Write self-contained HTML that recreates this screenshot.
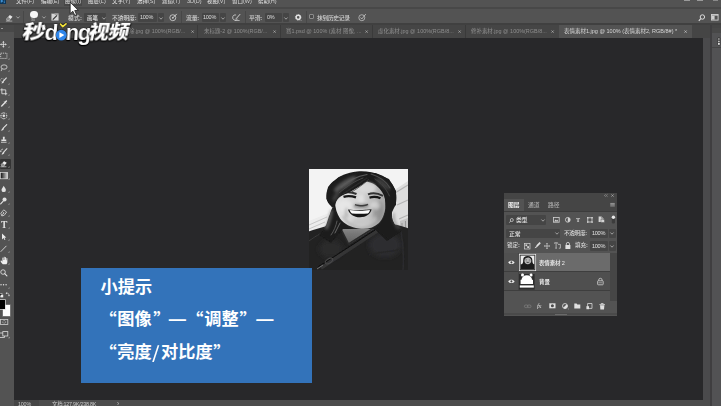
<!DOCTYPE html>
<html lang="zh-CN"><head><meta charset="utf-8"><title>Photoshop</title>
<style>
html,body{margin:0;padding:0;background:#28282a;}
body{width:721px;height:406px;overflow:hidden;position:relative;font-family:"Liberation Sans","Noto Sans CJK SC",sans-serif;}
#app{position:absolute;left:0;top:0;width:721px;height:406px;overflow:hidden;}
.t{position:absolute;white-space:nowrap;transform:scale(.5);transform-origin:0 0;display:block;}
svg{overflow:visible;display:block}
</style></head><body><div id="app">
<div style="position:absolute;left:0px;top:0px;width:721px;height:406px;background:#28282a;"></div>
<div style="position:absolute;left:0px;top:0px;width:721px;height:7px;background:#535353;"></div>
<div style="position:absolute;left:0px;top:6.5px;width:721px;height:2.5px;background:#484848;"></div>
<div style="position:absolute;left:0px;top:9px;width:721px;height:13.9px;background:#535353;"></div>
<div style="position:absolute;left:0px;top:22.9px;width:721px;height:1.8px;background:#404040;"></div>
<div style="position:absolute;left:0px;top:24.6px;width:721px;height:13.3px;background:#454545;"></div>
<div style="position:absolute;left:0px;top:25px;width:13.5px;height:381px;background:#535353;"></div>
<div style="position:absolute;left:0px;top:24.5px;width:13.5px;height:7px;background:#484848;"></div>
<div style="position:absolute;left:703px;top:38px;width:7px;height:362px;background:#4a4a4c;"></div>
<div style="position:absolute;left:709.5px;top:25px;width:2.5px;height:381px;background:#3f3e40;"></div>
<div style="position:absolute;left:712px;top:28px;width:9px;height:378px;background:#525254;"></div>
<div style="position:absolute;left:712px;top:28px;width:9px;height:5px;background:#484848;"></div>
<div style="position:absolute;left:712px;top:47px;width:9px;height:1px;background:#444;"></div>
<div style="position:absolute;left:14px;top:399.5px;width:696px;height:6.5px;background:#4c4c4c;"></div>
<div style="position:absolute;left:14px;top:399.5px;width:25px;height:6.5px;background:#454545;"></div>
<div style="position:absolute;left:0px;top:0px;width:5.8px;height:3.8px;background:#0e3557;"></div>
<svg style="position:absolute;left:0px;top:0px;" width="6" height="4" viewBox="0 0 6 4"><path d="M1.2 0V2.6M1.2 .4H2.4Q3.4 .8 2.4 1.6H1.2" fill="none" stroke="#4aa6f0" stroke-width=".8"/><path d="M4.8 .9Q3.6 .9 4 1.7Q5 2.2 4.4 2.8H3.6" fill="none" stroke="#4aa6f0" stroke-width=".6"/></svg>
<div style="position:absolute;left:63.8px;top:0px;width:18.4px;height:6.3px;background:#474747;"></div>
<span class="t" style="left:16px;top:-2.3px;font-size:11.0px;line-height:13.2px;color:#d4d4d4;font-weight:500;letter-spacing:0px;">文件(F)</span>
<span class="t" style="left:41px;top:-2.3px;font-size:11.0px;line-height:13.2px;color:#d4d4d4;font-weight:500;letter-spacing:0px;">编辑(E)</span>
<span class="t" style="left:65px;top:-2.3px;font-size:11.0px;line-height:13.2px;color:#d4d4d4;font-weight:500;letter-spacing:0px;">图像(I)</span>
<span class="t" style="left:88px;top:-2.3px;font-size:11.0px;line-height:13.2px;color:#d4d4d4;font-weight:500;letter-spacing:0px;">图层(L)</span>
<span class="t" style="left:112px;top:-2.3px;font-size:11.0px;line-height:13.2px;color:#d4d4d4;font-weight:500;letter-spacing:0px;">文字(Y)</span>
<span class="t" style="left:137px;top:-2.3px;font-size:11.0px;line-height:13.2px;color:#d4d4d4;font-weight:500;letter-spacing:0px;">选择(S)</span>
<span class="t" style="left:162px;top:-2.3px;font-size:11.0px;line-height:13.2px;color:#d4d4d4;font-weight:500;letter-spacing:0px;">滤镜(T)</span>
<span class="t" style="left:187px;top:-2.3px;font-size:11.0px;line-height:13.2px;color:#d4d4d4;font-weight:500;letter-spacing:0px;">3D(D)</span>
<span class="t" style="left:207px;top:-2.3px;font-size:11.0px;line-height:13.2px;color:#d4d4d4;font-weight:500;letter-spacing:0px;">视图(V)</span>
<span class="t" style="left:232px;top:-2.3px;font-size:11.0px;line-height:13.2px;color:#d4d4d4;font-weight:500;letter-spacing:0px;">窗口(W)</span>
<span class="t" style="left:258px;top:-2.3px;font-size:11.0px;line-height:13.2px;color:#d4d4d4;font-weight:500;letter-spacing:0px;">帮助(H)</span>
<div style="position:absolute;left:684px;top:0px;width:6px;height:1.2px;background:#9a9a9a;"></div>
<div style="position:absolute;left:697px;top:0px;width:6px;height:1.2px;background:#9a9a9a;"></div>
<div style="position:absolute;left:713px;top:0px;width:5px;height:1px;background:#8a8a8a;"></div>
<svg style="position:absolute;left:4.8px;top:13.8px;" width="8.6" height="7.7" viewBox="0 0 10 9"><path d="M1.2 6.2 L5.6 1.2 L8.8 3.2 L4.8 8 L2.6 8 Z" fill="#e4e4e4"/><path d="M1.2 6.2 L3.6 3.6 L6.2 5.6 L4.4 8 L2.6 8Z" fill="#8a8a8a"/><path d="M1 8.3H8.5" stroke="#d0d0d0" stroke-width=".8"/></svg>
<svg style="position:absolute;left:15.8px;top:15.8px;" width="4" height="3" viewBox="0 0 4 3"><path d="M.4 .5 L2 2.2 L3.6 .5" fill="none" stroke="#b8b8b8" stroke-width=".8"/></svg>
<div style="position:absolute;left:23px;top:11px;width:0.8px;height:11.5px;background:#474747;"></div>
<div style="position:absolute;left:30.4px;top:10.6px;width:7.3px;height:7.3px;background:#f6f6f6;border-radius:50%"></div>
<span class="t" style="left:31.4px;top:18.3px;font-size:6.8px;line-height:8.2px;color:#c8c8c8;font-weight:400;letter-spacing:0px;">30</span>
<svg style="position:absolute;left:42px;top:15.8px;" width="4" height="3" viewBox="0 0 4 3"><path d="M.4 .5 L2 2.2 L3.6 .5" fill="none" stroke="#b8b8b8" stroke-width=".8"/></svg>
<svg style="position:absolute;left:50.9px;top:12.9px;" width="8" height="8" viewBox="0 0 9 9"><rect x=".5" y=".5" width="8" height="8" fill="#d6d6d6"/><path d="M.5 .5h3l.8 1h4.2" fill="none" stroke="#666" stroke-width=".6"/><path d="M2 7.4 L6.8 2.6" stroke="#333" stroke-width="1.3"/></svg>
<span class="t" style="left:67.6px;top:13.8px;font-size:11.6px;line-height:13.9px;color:#d2d2d2;font-weight:500;letter-spacing:0.4px;">模式<b>:</b></span>
<div style="position:absolute;left:84.1px;top:12.8px;width:22.3px;height:9.1px;background:#454545;border-radius:1px"></div>
<span class="t" style="left:87.2px;top:14.5px;font-size:11.0px;line-height:13.2px;color:#dedede;font-weight:500;letter-spacing:0px;">画笔</span>
<svg style="position:absolute;left:101.8px;top:16.8px;" width="4" height="3" viewBox="0 0 4 3"><path d="M.4 .5 L2 2.2 L3.6 .5" fill="none" stroke="#b8b8b8" stroke-width=".8"/></svg>
<span class="t" style="left:112px;top:13.8px;font-size:11.6px;line-height:13.9px;color:#d2d2d2;font-weight:500;letter-spacing:-0.2px;">不透明度<b>:</b></span>
<div style="position:absolute;left:137.6px;top:12.8px;width:19px;height:9.1px;background:#454545;border-radius:1px"></div>
<span class="t" style="left:140.2px;top:14.0px;font-size:11.0px;line-height:13.2px;color:#dedede;font-weight:500;letter-spacing:-0.5px;">100%</span>
<div style="position:absolute;left:158px;top:12.8px;width:6px;height:9.1px;background:#454545;border-radius:1px"></div>
<svg style="position:absolute;left:159px;top:16.8px;" width="4" height="3" viewBox="0 0 4 3"><path d="M.4 .5 L2 2.2 L3.6 .5" fill="none" stroke="#b8b8b8" stroke-width=".8"/></svg>
<svg style="position:absolute;left:168.8px;top:13.2px;" width="8.6" height="8.6" viewBox="0 0 9.5 9.5"><circle cx="4.2" cy="5.2" r="3.3" fill="none" stroke="#d4d4d4" stroke-width=".9"/><path d="M4.2 5.4 L8.6 1" stroke="#d4d4d4" stroke-width="1.1"/><circle cx="4.2" cy="5.4" r=".9" fill="#d4d4d4"/></svg>
<div style="position:absolute;left:181px;top:11px;width:0.8px;height:11.5px;background:#474747;"></div>
<span class="t" style="left:185.8px;top:13.8px;font-size:11.6px;line-height:13.9px;color:#d2d2d2;font-weight:500;letter-spacing:-0.3px;">流量<b>:</b></span>
<div style="position:absolute;left:201.6px;top:12.8px;width:17.4px;height:9.1px;background:#454545;border-radius:1px"></div>
<span class="t" style="left:203.4px;top:14.0px;font-size:11.0px;line-height:13.2px;color:#dedede;font-weight:500;letter-spacing:-0.5px;">100%</span>
<div style="position:absolute;left:220.4px;top:12.8px;width:6px;height:9.1px;background:#454545;border-radius:1px"></div>
<svg style="position:absolute;left:221.4px;top:16.8px;" width="4" height="3" viewBox="0 0 4 3"><path d="M.4 .5 L2 2.2 L3.6 .5" fill="none" stroke="#b8b8b8" stroke-width=".8"/></svg>
<svg style="position:absolute;left:231.8px;top:13.2px;" width="8.9" height="8.5" viewBox="0 0 10 9.5"><path d="M4.6 2.2 A3 3 0 1 0 6.4 6.4" fill="none" stroke="#d4d4d4" stroke-width=".9"/><path d="M4.4 6.6 L9.2 1.2" stroke="#d4d4d4" stroke-width="1.1"/><path d="M3.2 8.4H8.6" stroke="#d4d4d4" stroke-width=".8"/></svg>
<div style="position:absolute;left:244.5px;top:11px;width:0.8px;height:11.5px;background:#474747;"></div>
<span class="t" style="left:249.2px;top:13.8px;font-size:11.6px;line-height:13.9px;color:#d2d2d2;font-weight:500;letter-spacing:-0.3px;">平滑<b>:</b></span>
<div style="position:absolute;left:265px;top:12.8px;width:17.4px;height:9.1px;background:#454545;border-radius:1px"></div>
<span class="t" style="left:266.8px;top:14.0px;font-size:11.0px;line-height:13.2px;color:#dedede;font-weight:500;letter-spacing:-0.5px;">0%</span>
<div style="position:absolute;left:283.4px;top:12.8px;width:6px;height:9.1px;background:#454545;border-radius:1px"></div>
<svg style="position:absolute;left:284.4px;top:16.8px;" width="4" height="3" viewBox="0 0 4 3"><path d="M.4 .5 L2 2.2 L3.6 .5" fill="none" stroke="#b8b8b8" stroke-width=".8"/></svg>
<svg style="position:absolute;left:294.9px;top:13.5px;" width="7.2" height="7.2" viewBox="0 0 9 9"><circle cx="4" cy="4.2" r="2.6" fill="none" stroke="#e4e4e4" stroke-width="1.9"/><circle cx="4" cy="4.2" r="3.6" fill="none" stroke="#e4e4e4" stroke-width=".9" stroke-dasharray="1.2 1.6"/><path d="M6.8 7.4h1.6l-.8 .9z" fill="#cfcfcf"/></svg>
<div style="position:absolute;left:306px;top:11px;width:0.8px;height:11.5px;background:#474747;"></div>
<div style="position:absolute;left:308.6px;top:13.6px;width:5px;height:5px;background:#4a4a4a;border:.7px solid #8c8c8c;border-radius:1px;box-sizing:border-box"></div>
<span class="t" style="left:317px;top:13.8px;font-size:11.6px;line-height:13.9px;color:#d2d2d2;font-weight:500;letter-spacing:-0.7px;">抹到历史记录</span>
<svg style="position:absolute;left:357.6px;top:13.2px;" width="8.6" height="8.6" viewBox="0 0 9.5 9.5"><circle cx="4.2" cy="5.2" r="3.3" fill="none" stroke="#bdbdbd" stroke-width=".9"/><path d="M2.8 5 L4.2 6.6 L8.6 1.2" fill="none" stroke="#bdbdbd" stroke-width="1"/></svg>
<svg style="position:absolute;left:697.5px;top:13.5px;" width="8" height="8" viewBox="0 0 8 8"><circle cx="4.4" cy="3" r="2.2" fill="none" stroke="#dcdcdc" stroke-width="1"/><path d="M2.8 4.6 L.8 6.8" stroke="#dcdcdc" stroke-width="1.2"/></svg>
<svg style="position:absolute;left:711px;top:14px;" width="8" height="7" viewBox="0 0 8 7"><rect x=".5" y=".5" width="6.6" height="5.6" fill="none" stroke="#d0d0d0" stroke-width=".9"/><rect x="1" y="1.8" width="2.6" height="3.8" fill="#d0d0d0"/><path d="M.5 1.2h6.6" stroke="#d0d0d0" stroke-width=".9"/></svg>
<svg style="position:absolute;left:67.8px;top:-0.4px;" width="13.2" height="17.6" viewBox="0 0 12 16"><path d="M2 2 L2 12.4 L4.4 10.2 L6.2 14 L7.8 13.3 L6.1 9.6 L9.3 9.4 Z" fill="#fff" stroke="#1a1a1a" stroke-width=".7" stroke-linejoin="round"/></svg>
<span class="t" style="left:129px;top:27.7px;font-size:10.9px;line-height:13.1px;color:#8e8e8e;font-weight:400;letter-spacing:0px;">除.jpg @ 100%(RGB/...</span>
<svg style="position:absolute;left:190.70000000000002px;top:30.0px;" width="3.2" height="3.2" viewBox="0 0 4 4"><path d="M.6 .6 L3.4 3.4 M3.4 .6 L.6 3.4" stroke="#b0b0b0" stroke-width=".9"/></svg>
<div style="position:absolute;left:197px;top:25px;width:0.8px;height:12.5px;background:#3a3a3a;"></div>
<span class="t" style="left:204px;top:27.7px;font-size:10.9px;line-height:13.1px;color:#8e8e8e;font-weight:400;letter-spacing:0px;">未标题-2 @ 100%(RGB/...</span>
<svg style="position:absolute;left:272.7px;top:30.0px;" width="3.2" height="3.2" viewBox="0 0 4 4"><path d="M.6 .6 L3.4 3.4 M3.4 .6 L.6 3.4" stroke="#b0b0b0" stroke-width=".9"/></svg>
<div style="position:absolute;left:280px;top:25px;width:0.8px;height:12.5px;background:#3a3a3a;"></div>
<span class="t" style="left:286px;top:27.7px;font-size:10.9px;line-height:13.1px;color:#8e8e8e;font-weight:400;letter-spacing:0px;">赛1.psd @ 100% (素材 图像, ...</span>
<svg style="position:absolute;left:364.7px;top:30.0px;" width="3.2" height="3.2" viewBox="0 0 4 4"><path d="M.6 .6 L3.4 3.4 M3.4 .6 L.6 3.4" stroke="#b0b0b0" stroke-width=".9"/></svg>
<div style="position:absolute;left:372px;top:25px;width:0.8px;height:12.5px;background:#3a3a3a;"></div>
<span class="t" style="left:378px;top:27.7px;font-size:10.9px;line-height:13.1px;color:#8e8e8e;font-weight:400;letter-spacing:0px;">虚化素材.jpg @ 100%(RGB/8...</span>
<svg style="position:absolute;left:457.7px;top:30.0px;" width="3.2" height="3.2" viewBox="0 0 4 4"><path d="M.6 .6 L3.4 3.4 M3.4 .6 L.6 3.4" stroke="#b0b0b0" stroke-width=".9"/></svg>
<div style="position:absolute;left:465px;top:25px;width:0.8px;height:12.5px;background:#3a3a3a;"></div>
<span class="t" style="left:471px;top:27.7px;font-size:10.9px;line-height:13.1px;color:#8e8e8e;font-weight:400;letter-spacing:0px;">修补素材.jpg @ 100%(RGB/8...</span>
<svg style="position:absolute;left:550.6999999999999px;top:30.0px;" width="3.2" height="3.2" viewBox="0 0 4 4"><path d="M.6 .6 L3.4 3.4 M3.4 .6 L.6 3.4" stroke="#b0b0b0" stroke-width=".9"/></svg>
<div style="position:absolute;left:559px;top:25px;width:133px;height:12.7px;background:#535353;"></div>
<span class="t" style="left:564px;top:27.7px;font-size:11.0px;line-height:13.2px;color:#d6d6d6;font-weight:400;letter-spacing:0px;">表情素材1.jpg @ 100% (表情素材2, RGB/8#) *</span>
<svg style="position:absolute;left:683.6999999999999px;top:30.0px;" width="3.2" height="3.2" viewBox="0 0 4 4"><path d="M.6 .6 L3.4 3.4 M3.4 .6 L.6 3.4" stroke="#c8c8c8" stroke-width=".9"/></svg>
<svg style="position:absolute;left:716.5px;top:36.5px;" width="4" height="9" viewBox="0 0 4 9"><rect x=".6" y=".4" width="2.6" height="8" rx=".8" fill="#2e2e2e"/><circle cx="1.9" cy="2" r=".8" fill="#e0e0e0"/><circle cx="1.9" cy="4.4" r=".8" fill="#e0e0e0"/><rect x="1" y="5.8" width="1.8" height="2" fill="#e0e0e0"/></svg>
<span class="t" style="left:18.2px;top:400.5px;font-size:10.8px;line-height:13.0px;color:#c8c8c8;font-weight:400;letter-spacing:-0.4px;">100%</span>
<span class="t" style="left:52px;top:400.5px;font-size:10.8px;line-height:13.0px;color:#c8c8c8;font-weight:400;letter-spacing:-0.5px;">文档:127.9K/238.8K</span>
<span class="t" style="left:116.5px;top:399.8px;font-size:13.0px;line-height:15.6px;color:#c0c0c0;font-weight:400;letter-spacing:0px;">›</span>
<div style="position:absolute;left:0.5px;top:27.5px;width:2px;height:0.8px;background:#9a9a9a;"></div>
<div style="position:absolute;left:0px;top:158.9px;width:10.7px;height:10.2px;background:#343434;border-radius:1px"></div>
<svg style="position:absolute;left:0.40px;top:40.80px" width="6.8" height="6.8" viewBox="0 0 9 9"><path d="M4.5 1V8M1 4.5H8" stroke="#e2e2e2" stroke-width="1"/><path d="M4.5 0L6.1 2H2.9ZM4.5 9L6.1 7H2.9ZM0 4.5L2 2.9V6.1ZM9 4.5L7 2.9V6.1Z" fill="#e2e2e2"/></svg>
<svg style="position:absolute;left:8.3px;top:46.40px" width="1.6" height="1.6" viewBox="0 0 2 2"><path d="M1.8 .2V1.8H.2Z" fill="#c4c4c4"/></svg>
<svg style="position:absolute;left:0.30px;top:51.60px" width="7.6" height="7.6" viewBox="0 0 9 9"><rect x=".8" y="1.4" width="7.4" height="6.2" fill="none" stroke="#e2e2e2" stroke-width=".9" stroke-dasharray="1.5 1"/></svg>
<svg style="position:absolute;left:8.3px;top:57.60px" width="1.6" height="1.6" viewBox="0 0 2 2"><path d="M1.8 .2V1.8H.2Z" fill="#c4c4c4"/></svg>
<svg style="position:absolute;left:0.30px;top:63.90px" width="7.6" height="7.6" viewBox="0 0 9 9"><ellipse cx="4.8" cy="3.6" rx="3.6" ry="2.6" fill="none" stroke="#e2e2e2" stroke-width=".9"/><path d="M2.4 5.4 C1.6 6.4 2.2 7.4 1.4 8.4" fill="none" stroke="#e2e2e2" stroke-width=".9"/></svg>
<svg style="position:absolute;left:8.3px;top:69.90px" width="1.6" height="1.6" viewBox="0 0 2 2"><path d="M1.8 .2V1.8H.2Z" fill="#c4c4c4"/></svg>
<svg style="position:absolute;left:0.30px;top:76.50px" width="7.6" height="7.6" viewBox="0 0 9 9"><path d="M7.8 .8 L4 5" stroke="#e2e2e2" stroke-width="1.3"/><path d="M4.2 4.6 C3 4.8 2.6 5.8 1.6 7.6 C3.2 7.4 4.4 6.8 4.8 5.6Z" fill="#e2e2e2"/><ellipse cx="2.6" cy="3.6" rx="2.2" ry="1.8" fill="none" stroke="#e2e2e2" stroke-width=".7" stroke-dasharray="1 .8"/></svg>
<svg style="position:absolute;left:8.3px;top:82.50px" width="1.6" height="1.6" viewBox="0 0 2 2"><path d="M1.8 .2V1.8H.2Z" fill="#c4c4c4"/></svg>
<svg style="position:absolute;left:0.30px;top:88.00px" width="7.6" height="7.6" viewBox="0 0 9 9"><path d="M2.2 .4V6.8H8.6M.4 2.2H6.8V8.6" fill="none" stroke="#e2e2e2" stroke-width="1"/></svg>
<svg style="position:absolute;left:8.3px;top:94.00px" width="1.6" height="1.6" viewBox="0 0 2 2"><path d="M1.8 .2V1.8H.2Z" fill="#c4c4c4"/></svg>
<svg style="position:absolute;left:0.30px;top:100.10px" width="7.6" height="7.6" viewBox="0 0 9 9"><path d="M1 8 L1.4 6.4 L5.2 2.6 L6.4 3.8 L2.6 7.6Z" fill="#e2e2e2"/><path d="M5 1.8 L7.2 4" stroke="#e2e2e2" stroke-width="1"/><path d="M6 2.8 L7.6 1.2" stroke="#e2e2e2" stroke-width="1.8" stroke-linecap="round"/></svg>
<svg style="position:absolute;left:8.3px;top:106.10px" width="1.6" height="1.6" viewBox="0 0 2 2"><path d="M1.8 .2V1.8H.2Z" fill="#c4c4c4"/></svg>
<svg style="position:absolute;left:0.30px;top:112.20px" width="7.6" height="7.6" viewBox="0 0 9 9"><rect x="1.4" y="1.4" width="6.2" height="6.2" rx="1" fill="none" stroke="#e2e2e2" stroke-width=".9" stroke-dasharray="1.4 .9"/><circle cx="4.5" cy="4.5" r="1.5" fill="#e2e2e2"/><path d="M4.5 .2V1.6M4.5 7.4V8.8M.2 4.5H1.6M7.4 4.5H8.8" stroke="#e2e2e2" stroke-width=".9"/></svg>
<svg style="position:absolute;left:8.3px;top:118.20px" width="1.6" height="1.6" viewBox="0 0 2 2"><path d="M1.8 .2V1.8H.2Z" fill="#c4c4c4"/></svg>
<svg style="position:absolute;left:0.30px;top:123.70px" width="7.6" height="7.6" viewBox="0 0 9 9"><path d="M8 .8 L3.8 5" stroke="#e2e2e2" stroke-width="1.3" stroke-linecap="round"/><path d="M3.9 4.6 C2.8 4.8 2.2 5.8 1 8 C2.8 7.8 4.2 7.2 4.8 5.6Z" fill="#e2e2e2"/></svg>
<svg style="position:absolute;left:8.3px;top:129.70px" width="1.6" height="1.6" viewBox="0 0 2 2"><path d="M1.8 .2V1.8H.2Z" fill="#c4c4c4"/></svg>
<svg style="position:absolute;left:0.30px;top:136.10px" width="7.6" height="7.6" viewBox="0 0 9 9"><path d="M3.4 .8H5.6V2.6L5.2 4.2H7.4V6H1.6V4.2H3.8L3.4 2.6Z" fill="#e2e2e2"/><path d="M1.2 7.4H7.8" stroke="#e2e2e2" stroke-width="1"/></svg>
<svg style="position:absolute;left:8.3px;top:142.10px" width="1.6" height="1.6" viewBox="0 0 2 2"><path d="M1.8 .2V1.8H.2Z" fill="#c4c4c4"/></svg>
<svg style="position:absolute;left:0.30px;top:148.20px" width="7.6" height="7.6" viewBox="0 0 9 9"><path d="M8.2 .8 L4.4 4.8" stroke="#e2e2e2" stroke-width="1.2" stroke-linecap="round"/><path d="M4.4 4.4 C3.4 4.6 2.8 5.6 1.8 7.8 C3.4 7.6 4.8 7 5.2 5.6Z" fill="#e2e2e2"/><path d="M3.6 1.4 A2.6 2.6 0 0 0 .8 4.4" fill="none" stroke="#e2e2e2" stroke-width=".8"/><path d="M.2 3.6L.9 5L2 3.9Z" fill="#e2e2e2"/></svg>
<svg style="position:absolute;left:8.3px;top:154.20px" width="1.6" height="1.6" viewBox="0 0 2 2"><path d="M1.8 .2V1.8H.2Z" fill="#c4c4c4"/></svg>
<svg style="position:absolute;left:0.40px;top:160.40px" width="7.6" height="7.6" viewBox="0 0 9 9"><path d="M.8 5.6 L4.8 1.4 L8 3.4 L4.6 7.4 L2.4 7.4Z" fill="#f0f0f0"/><path d="M.8 5.6 L2.8 3.5 L5.6 5.4 L4.2 7.4 L2.4 7.4Z" fill="#8e8e8e"/><path d="M.6 8H7.6" stroke="#e8e8e8" stroke-width=".8"/></svg>
<svg style="position:absolute;left:8.3px;top:166.40px" width="1.6" height="1.6" viewBox="0 0 2 2"><path d="M1.8 .2V1.8H.2Z" fill="#c4c4c4"/></svg>
<svg style="position:absolute;left:0.4px;top:172.4px" width="8" height="7.4" viewBox="0 0 8 7.4"><defs><linearGradient id="tg" x1="0" y1="0" x2="1" y2="0"><stop offset="0" stop-color="#0c0c0c"/><stop offset="1" stop-color="#d8d8d8"/></linearGradient></defs><rect x=".4" y=".4" width="7.2" height="6.4" fill="url(#tg)" stroke="#dcdcdc" stroke-width=".7"/></svg>
<svg style="position:absolute;left:8.3px;top:178.4px" width="2" height="2" viewBox="0 0 2 2"><path d="M1.6 .2V1.6H.2Z" fill="#bdbdbd"/></svg>
<svg style="position:absolute;left:0.00px;top:184.80px" width="7.6" height="7.6" viewBox="0 0 9 9"><path d="M4.4 .8 C5.4 2.8 7 4.2 7 5.8 A2.6 2.6 0 0 1 1.8 5.8 C1.8 4.2 3.4 2.8 4.4 .8Z" fill="#e2e2e2"/></svg>
<svg style="position:absolute;left:8.3px;top:190.80px" width="1.6" height="1.6" viewBox="0 0 2 2"><path d="M1.8 .2V1.8H.2Z" fill="#c4c4c4"/></svg>
<svg style="position:absolute;left:0.00px;top:196.90px" width="7.6" height="7.6" viewBox="0 0 9 9"><circle cx="5.4" cy="3" r="2.4" fill="#e2e2e2"/><path d="M3.8 4.8 L.8 8.2" stroke="#e2e2e2" stroke-width="1.3" stroke-linecap="round"/></svg>
<svg style="position:absolute;left:8.3px;top:202.90px" width="1.6" height="1.6" viewBox="0 0 2 2"><path d="M1.8 .2V1.8H.2Z" fill="#c4c4c4"/></svg>
<svg style="position:absolute;left:0.00px;top:208.80px" width="7.6" height="7.6" viewBox="0 0 9 9"><path d="M2.2 8.2 L1 5 L4.4 1 L7.8 3.6 L5 7.4Z" fill="none" stroke="#e2e2e2" stroke-width=".9" stroke-linejoin="round"/><circle cx="4.2" cy="4.8" r=".9" fill="#e2e2e2"/><path d="M2 8 L4 5" stroke="#e2e2e2" stroke-width=".7"/></svg>
<svg style="position:absolute;left:8.3px;top:214.80px" width="1.6" height="1.6" viewBox="0 0 2 2"><path d="M1.8 .2V1.8H.2Z" fill="#c4c4c4"/></svg>
<span class="t" style="left:0.8px;top:218.6px;font-size:19px;line-height:22px;color:#e4e4e4;font-weight:700;font-family:&quot;Liberation Serif&quot;,serif;">T</span>
<svg style="position:absolute;left:8.3px;top:226.6px" width="2" height="2" viewBox="0 0 2 2"><path d="M1.6 .2V1.6H.2Z" fill="#bdbdbd"/></svg>
<svg style="position:absolute;left:-0.20px;top:232.80px" width="7.6" height="7.6" viewBox="0 0 9 9"><path d="M2.4 .6 L2.4 7.6 L4.2 6 L5.4 8.4 L6.4 7.9 L5.2 5.6 L7.4 5.4Z" fill="#ececec"/></svg>
<svg style="position:absolute;left:8.3px;top:238.80px" width="1.6" height="1.6" viewBox="0 0 2 2"><path d="M1.8 .2V1.8H.2Z" fill="#c4c4c4"/></svg>
<svg style="position:absolute;left:0.00px;top:244.80px" width="7.6" height="7.6" viewBox="0 0 9 9"><path d="M.8 8 L7.6 1" stroke="#e2e2e2" stroke-width="1"/></svg>
<svg style="position:absolute;left:8.3px;top:250.80px" width="1.6" height="1.6" viewBox="0 0 2 2"><path d="M1.8 .2V1.8H.2Z" fill="#c4c4c4"/></svg>
<svg style="position:absolute;left:0.20px;top:256.10px" width="8.6" height="8.6" viewBox="0 0 9 9"><path d="M2.9 8.6 C2 7.4 .9 6.2 .6 5.4 C.5 4.8 1.2 4.6 1.7 5.1 L2.5 6 V2 C2.5 1.3 3.5 1.3 3.5 2 V4.2 H3.9 V1.2 C3.9 .5 4.9 .5 4.9 1.2 V4.2 H5.3 V1.6 C5.3 .9 6.3 .9 6.3 1.6 V4.4 H6.7 V2.6 C6.7 1.9 7.7 1.9 7.7 2.6 V6.2 C7.7 7.4 7.2 8 6.8 8.6Z" fill="#eeeeee"/></svg>
<svg style="position:absolute;left:8.3px;top:262.60px" width="1.6" height="1.6" viewBox="0 0 2 2"><path d="M1.8 .2V1.8H.2Z" fill="#c4c4c4"/></svg>
<svg style="position:absolute;left:0.00px;top:268.60px" width="7.6" height="7.6" viewBox="0 0 9 9"><circle cx="3.6" cy="3.6" r="2.7" fill="none" stroke="#e2e2e2" stroke-width="1"/><path d="M5.6 5.6 L8.2 8.2" stroke="#e2e2e2" stroke-width="1.3" stroke-linecap="round"/></svg>
<svg style="position:absolute;left:0.00px;top:280.60px" width="7.6" height="7.6" viewBox="0 0 9 9"><circle cx="1.2" cy="4.5" r=".85" fill="#e2e2e2"/><circle cx="4.2" cy="4.5" r=".85" fill="#e2e2e2"/><circle cx="7.2" cy="4.5" r=".85" fill="#e2e2e2"/></svg>
<svg style="position:absolute;left:8.3px;top:286.60px" width="1.6" height="1.6" viewBox="0 0 2 2"><path d="M1.8 .2V1.8H.2Z" fill="#c4c4c4"/></svg>
<svg style="position:absolute;left:0px;top:292.4px" width="11" height="6" viewBox="0 0 11 6"><rect x="-.6" y="1.6" width="2.6" height="2.6" fill="#111" stroke="#ddd" stroke-width=".5"/><rect x=".6" y="2.8" width="2.6" height="2.6" fill="#eee"/><path d="M6.4 1.2 C8 .8 9 1.8 9 3.4" fill="none" stroke="#dcdcdc" stroke-width=".7"/><path d="M5.6 1.3L7 .3V2.3ZM9 4.6L8 3.2H10Z" fill="#dcdcdc"/></svg>
<div style="position:absolute;left:2.6px;top:305.4px;width:7.4px;height:10.2px;background:#fdfdfd;box-shadow:0 0 0 .6px #8a8a8a"></div>
<div style="position:absolute;left:-1px;top:300px;width:6.2px;height:9px;background:#000;box-shadow:0 0 0 .7px #d8d8d8"></div>
<svg style="position:absolute;left:0px;top:318.6px" width="9" height="6" viewBox="0 0 9 6"><rect x=".4" y=".4" width="7.4" height="5" fill="none" stroke="#cfcfcf" stroke-width=".8"/><circle cx="4.1" cy="2.9" r="1.4" fill="none" stroke="#cfcfcf" stroke-width=".7" stroke-dasharray=".9 .6"/></svg>
<svg style="position:absolute;left:0px;top:330.6px" width="11" height="8" viewBox="0 0 11 8"><rect x="-.6" y="2" width="5" height="4.4" fill="none" stroke="#dcdcdc" stroke-width=".8"/><rect x="2.8" y=".6" width="5" height="4.4" fill="#535353" stroke="#dcdcdc" stroke-width=".8"/><path d="M9.6 5.8V7.2H8.2Z" fill="#bdbdbd"/></svg>
<style>
.lg{position:absolute;white-space:nowrap;color:#fff;font-weight:900;font-style:normal;transform-origin:0 100%;will-change:transform;
text-shadow:0 0 1.2px #000,0 0 1.2px #000,.6px .8px 1.2px #000,-.5px .5px 1px #000;}
.lgc{font-family:"Noto Sans CJK SC",sans-serif;font-size:19px;line-height:20px;transform:skewX(-12deg) scaleX(1.08);}
.lgl{font-family:"Liberation Sans",sans-serif;font-size:22px;line-height:20px;font-weight:700;transform:skewX(-4deg);}
</style>
<span class="lg lgc" style="left:20.6px;top:20.8px;transform:skewX(-12deg) scaleX(1.2)">秒</span>
<span class="lg lgl" style="left:44.2px;top:23px;">d</span>
<span class="lg lgl" style="left:65.2px;top:23px;letter-spacing:-1.2px">ng</span>
<span class="lg lgc" style="left:87.4px;top:20.8px;letter-spacing:-.4px">视频</span>
<svg style="position:absolute;left:55px;top:22px" width="14" height="20" viewBox="0 0 14 20">
<circle cx="6.3" cy="13.1" r="6" fill="#111" opacity=".55"/>
<circle cx="6.3" cy="13.1" r="5.4" fill="#2f86ea"/>
<path d="M4.4 10.2 L9.4 13 L4.4 16Z" fill="#fff"/>
<path d="M5.6 2.2 L7.8 4.6 L11 1.8" fill="none" stroke="#111" stroke-width="2.8" stroke-linecap="round" stroke-linejoin="round" opacity=".6"/>
<path d="M5.6 2.2 L7.8 4.6 L11 1.8" fill="none" stroke="#f3e23a" stroke-width="1.7" stroke-linecap="round" stroke-linejoin="round"/>
</svg>

<svg style="position:absolute;left:308.8px;top:168.8px" width="99" height="100.9" viewBox="0 0 99 100.9">
<defs>
<clipPath id="pc"><rect x="0" y="0" width="99" height="100.9"/></clipPath>
<filter id="b1" x="-20%" y="-20%" width="140%" height="140%"><feGaussianBlur stdDeviation="0.7"/></filter>
<filter id="b2" x="-20%" y="-20%" width="140%" height="140%"><feGaussianBlur stdDeviation="1.4"/></filter>
<filter id="b3" x="-30%" y="-30%" width="160%" height="160%"><feGaussianBlur stdDeviation="2.4"/></filter>
<linearGradient id="skin" x1="0" y1="0" x2="1" y2="0"><stop offset="0" stop-color="#e4e4e4"/><stop offset=".55" stop-color="#d0d0d0"/><stop offset="1" stop-color="#a4a4a4"/></linearGradient>
<linearGradient id="neck" x1="0" y1="0" x2="0" y2="1"><stop offset="0" stop-color="#a0a0a0"/><stop offset=".5" stop-color="#7a7a7a"/><stop offset="1" stop-color="#5e5e5e"/></linearGradient>
</defs>
<g clip-path="url(#pc)">
<rect width="99" height="100.9" fill="#f3f3f3"/>
<!-- background buildings right -->
<g filter="url(#b1)">
<path d="M84 22 L99 12 L99 62 L84 62Z" fill="#dedede"/>
<path d="M86 24 L99 16 M88 36 L99 31 M90 50 L99 46" stroke="#b4b4b4" stroke-width="1.2" fill="none"/>
<path d="M91 52 L99 49 L99 62 L91 62Z" fill="#c4c4c4"/>
<path d="M93 54 L93 62 M96.5 52 L96.5 62" stroke="#8a8a8a" stroke-width=".8"/>
<!-- background left bottom -->
<path d="M0 52 L20 44 L20 64 L0 64Z" fill="#ececec"/>
<path d="M0 56 L18 48 M0 60 L16 53" stroke="#c2c2c2" stroke-width=".9"/>
</g>
<!-- clothes -->
<g filter="url(#b1)">
<path d="M-2 63 C6 60 14 58 22 56 L34 54 L50 60 L70 54 L84 55 C90 56 96 58 101 60 L101 103 L-2 103Z" fill="#222224"/>
<!-- neck -->
<path d="M30 52 L70 52 L68 58 L40 75.5 L31 58Z" fill="url(#neck)"/>
</g>
<g filter="url(#b3)"><ellipse cx="76" cy="76" rx="16" ry="12" fill="#303032" opacity=".8"/><ellipse cx="22" cy="80" rx="12" ry="9" fill="#2c2c2e" opacity=".7"/></g>
<!-- collar edges -->
<g filter="url(#b1)">
<path d="M30.5 57 L39.5 75 L68 57" fill="none" stroke="#2a2a2a" stroke-width="1.6"/>
<path d="M0 72 C8 66 14 63 20 62" stroke="#3a3a3a" stroke-width="1" fill="none"/>
<!-- strap -->
<path d="M68 62 L12 99" stroke="#343436" stroke-width="3.4" fill="none"/>
<path d="M66 61 L9 98" stroke="#0e0e0e" stroke-width="1" fill="none"/>
<ellipse cx="20" cy="92" rx="4.2" ry="2.2" transform="rotate(-32 20 92)" fill="none" stroke="#4a4a4a" stroke-width="1"/>
<path d="M8 100 L14 96" stroke="#7a7a7a" stroke-width=".9"/>
<path d="M92 62 C94 74 95 88 94 101" stroke="#2c2c2e" stroke-width="1.4" fill="none"/>
<path d="M60 86 C70 82 82 84 90 80" stroke="#262628" stroke-width="1.6" fill="none"/>
</g>
<!-- hair back -->
<g filter="url(#b1)">
<path d="M48 2.4 C55 1.8 64 2.4 73 6.5 C80 10 85.5 16 87 24 C88.2 31 86.8 36 84.5 40 C82.5 44 82 47 84 52 C86 57 90 60 93 62 L78 72 L66 60 L34 60 L22 74 L10 66 C14 62 17.5 57 18.8 51 C20 46 22.8 42 24.5 38 C21 37 17.5 33 17.3 28 C17.2 22 19.5 16 24 12.5 C30 7 38 3.4 48 2.4Z" fill="#1b1b1b"/>
</g>
<!-- face -->
<g filter="url(#b1)">
<path d="M26 32 C26 24 32 14 52 12 C68 12 76.5 24 76.5 34 C76.8 42 74.5 49 70 54 C64.5 59 58 60.5 50 59.5 C42 58.5 35 55 31 49.5 C28 45 26 39 26 32Z" fill="url(#skin)"/>
</g>
<!-- face shading -->
<g filter="url(#b2)">
<ellipse cx="70.5" cy="42" rx="4.2" ry="10" fill="#7c7c7c" opacity=".55"/>
<ellipse cx="36" cy="37" rx="7" ry="6" fill="#e8e8e8" opacity=".85"/>
<ellipse cx="66" cy="36.5" rx="5" ry="4" fill="#dcdcdc" opacity=".7"/>
<ellipse cx="52" cy="37" rx="8" ry="2.2" fill="#707070" opacity=".75"/>
<ellipse cx="52" cy="30" rx="3.2" ry="5" fill="#e2e2e2" opacity=".85"/>
<ellipse cx="58" cy="19" rx="9" ry="5.5" fill="#dadada" opacity=".85"/>
<ellipse cx="51" cy="53" rx="9" ry="3.4" fill="#c6c6c6" opacity=".9"/>
<path d="M34 47 C37 53 42 57.4 50 58.8 C58 59.8 66 57 70 51" stroke="#808080" stroke-width="1.8" fill="none" opacity=".55"/>
<path d="M38 39 C36.5 42 36.5 45 38.5 48 M64 39 C66 42 66 45 64 48" stroke="#7e7e7e" stroke-width="1.4" fill="none" opacity=".8"/>
</g>
<!-- eyes, brows, nose, mouth -->
<g filter="url(#b1)">
<path d="M32 24.4 C37 22.8 43 23 47.5 25" stroke="#303030" stroke-width="2" fill="none"/>
<path d="M34.5 27.8 C38 26.8 43 27 47 28.4" stroke="#161616" stroke-width="2.3" fill="none"/>
<path d="M59 25.4 C63 23.8 68.5 24 74 26.8" stroke="#303030" stroke-width="2" fill="none"/>
<path d="M60.5 28.6 C64 27.6 68 27.8 71.5 29.2" stroke="#161616" stroke-width="2.3" fill="none"/>
<path d="M46 35.6 C48 36.6 50 36.2 52.4 36.8 C55 36.2 57 36.6 59 35.4" stroke="#3e3e3e" stroke-width="1.5" fill="none"/>
<path d="M39 40.4 C46 41.2 56 41.2 62.6 40.2 C61.6 45 57 48.2 51 48.2 C45 48.2 40.4 45.2 39 40.4Z" fill="#141414"/>
<path d="M40.6 41 C47 41.9 55 41.9 61 40.9 C60.6 42.6 59.8 43.8 58.8 44.4 C54 45 47.6 45 43 44.4 C41.8 43.8 41 42.6 40.6 41Z" fill="#fcfcfc"/>
</g>
<!-- hair front (bangs) -->
<g filter="url(#b1)">
<path d="M60.7 10.3 C57 13 54 15 51 17 C47 19.6 44 21.4 40.8 22.9 C37 24.6 34 25.8 31.9 27.3 C29 29.4 27.4 31.4 26.4 35 C25.8 37 25 38.5 23 38.5 L17.5 30 L19 18 L30 8 L48 3 L62 4Z" fill="#1b1b1b"/>
<path d="M60.7 10.3 C64 12 67 14.4 69.3 17 C71.6 19.6 73.6 22 74.6 24.3 C75.8 27 76.2 30 76.4 34 C76.6 38 77 41 78.5 44 L87 36 L87 22 L80 10 L66 4 L60 5Z" fill="#1b1b1b"/>
<!-- hair side strands -->
<path d="M24.5 37 C25 42 25.5 46 28 50 C30 54 31 56 32 60 L22 72 L12 66 C17 60 20 52 21 46 C21.5 42 23 39 24.5 37Z" fill="#1e1e1e"/>
<path d="M77 36 C77 42 75.5 48 72 53 C70 56 69 58 68 61 L80 70 L92 62 C86 58 83 52 83 46 C83 42 80 38 77 36Z" fill="#1e1e1e"/>
</g>
<g filter="url(#b1)" fill="none"><path d="M58 9 C52 13 44 18 34 25" stroke="#2a2a2a" stroke-width="1.3"/><path d="M60 10 C55 15 49 19 42 23.5" stroke="#3a3a3a" stroke-width=".9" opacity=".8"/></g>
<g filter="url(#b2)" fill="none"><path d="M22.5 41 C21.5 47 20.5 53 17 60" stroke="#8a8a8a" stroke-width="2.6" opacity=".7"/><path d="M84.5 44 C84 50 86 56 90 60" stroke="#6a6a6a" stroke-width="2" opacity=".6"/></g>
<!-- hair sheen -->
<g filter="url(#b2)">
<ellipse cx="36" cy="15" rx="13" ry="3.4" transform="rotate(-33 36 15)" fill="#6a6a6a" opacity=".75"/>
<ellipse cx="27" cy="27" rx="6" ry="2.2" transform="rotate(-60 27 27)" fill="#555" opacity=".6"/>
<ellipse cx="74" cy="15" rx="9" ry="2.4" transform="rotate(40 74 15)" fill="#505050" opacity=".7"/>
</g>
<!-- hair highlights -->
<g filter="url(#b1)" fill="none" stroke-linecap="round">
<path d="M58 5.5 C50 7 40 11 32 18" stroke="#5a5a5a" stroke-width="1.2"/>
<path d="M54 9 C46 12 38 17 30 24" stroke="#484848" stroke-width="1"/>
<path d="M62 5 C70 7.5 77 12 81 19" stroke="#4e4e4e" stroke-width="1.1"/>
<path d="M66 10 C72 14 77 19 80.5 27" stroke="#404040" stroke-width="1"/>
<path d="M28 52 C27 57 25 62 22 66" stroke="#5c5c5c" stroke-width=".9"/>
<path d="M31 54 L26 64" stroke="#8a8a8a" stroke-width=".7"/>
</g>
</g>
</svg>

<div id="tip" style="position:absolute;left:80.8px;top:267.8px;width:231.2px;height:115.6px;background:#3373ba;"></div>
<style>.tp{position:absolute;font-size:17.2px;line-height:26px;color:#fff;font-weight:700;white-space:nowrap;}
.q{font-family:"Noto Sans CJK SC",sans-serif;}</style>
<span class="tp" style="left:100.6px;top:274px;">小提示</span>
<span class="tp q" style="left:99.5px;top:305.8px;">“</span>
<span class="tp" style="left:117.2px;top:305.8px;">图像</span>
<span class="tp q" style="left:153.2px;top:305.8px;">”</span>
<span class="tp" style="left:168.7px;top:305.8px;">—</span>
<span class="tp q" style="left:186.3px;top:305.8px;">“</span>
<span class="tp" style="left:204.2px;top:305.8px;">调整</span>
<span class="tp q" style="left:239.5px;top:305.8px;">”</span>
<span class="tp" style="left:256.3px;top:305.8px;">—</span>
<span class="tp q" style="left:99.5px;top:339.4px;">“</span>
<span class="tp" style="left:117.2px;top:339.4px;">亮度</span>
<span class="tp q" style="left:152.4px;top:339.4px;font-weight:500;transform:scaleX(1.15);transform-origin:0 0">/</span>
<span class="tp" style="left:161px;top:339.4px;">对比度</span>
<span class="tp q" style="left:213.3px;top:339.4px;">”</span>

<div style="position:absolute;left:503.6px;top:192.5px;width:113.4px;height:123px;background:#535353;"></div>
<div style="position:absolute;left:503.6px;top:192.5px;width:113.4px;height:6.2px;background:#454545;"></div>
<svg style="position:absolute;left:603.5px;top:194.2px;" width="4" height="3" viewBox="0 0 4 3"><path d="M1.8 .3 L.4 1.5 L1.8 2.7 M3.6 .3 L2.2 1.5 L3.6 2.7" fill="none" stroke="#a0a0a0" stroke-width=".6"/></svg>
<svg style="position:absolute;left:611.2px;top:194.2px;" width="3.2" height="3.2" viewBox="0 0 4 4"><path d="M.5 .5 L3.3 3.3 M3.3 .5 L.5 3.3" stroke="#b0b0b0" stroke-width=".9"/></svg>
<div style="position:absolute;left:503.6px;top:198.7px;width:113.4px;height:12.8px;background:#454545;"></div>
<div style="position:absolute;left:503.6px;top:198.7px;width:20px;height:12.8px;background:#535353;"></div>
<span class="t" style="left:507.5px;top:200.6px;font-size:11.6px;line-height:13.9px;color:#f0f0f0;font-weight:700;letter-spacing:0px;">图层</span>
<span class="t" style="left:528px;top:200.6px;font-size:11.6px;line-height:13.9px;color:#a8a8a8;font-weight:500;letter-spacing:0px;">通道</span>
<span class="t" style="left:547.5px;top:200.6px;font-size:11.6px;line-height:13.9px;color:#a8a8a8;font-weight:500;letter-spacing:0px;">路径</span>
<svg style="position:absolute;left:610px;top:203.2px;" width="5.4" height="3.6" viewBox="0 0 6 4"><path d="M.3 .5H5.3M.3 1.9H5.3M.3 3.3H5.3" stroke="#b4b4b4" stroke-width=".8"/></svg>
<div style="position:absolute;left:503.6px;top:211.2px;width:113.4px;height:0.7px;background:#3c3c3c;"></div>
<div style="position:absolute;left:506px;top:215px;width:40px;height:10px;background:#454545;border-radius:1px"></div>
<svg style="position:absolute;left:509px;top:217.5px;" width="5" height="5" viewBox="0 0 5 5"><circle cx="2.8" cy="2" r="1.5" fill="none" stroke="#d8d8d8" stroke-width=".7"/><path d="M1.7 3.1 L.4 4.6" stroke="#d8d8d8" stroke-width=".8"/></svg>
<span class="t" style="left:515.5px;top:216.3px;font-size:11.6px;line-height:13.9px;color:#e4e4e4;font-weight:500;letter-spacing:0px;">类型</span>
<svg style="position:absolute;left:540.5px;top:218.8px;" width="4" height="3" viewBox="0 0 4 3"><path d="M.4 .5 L2 2.2 L3.6 .5" fill="none" stroke="#b8b8b8" stroke-width=".8"/></svg>
<svg style="position:absolute;left:552.8px;top:216.5px;" width="7" height="6" viewBox="0 0 7 6"><rect x=".4" y=".4" width="5.8" height="4.8" fill="none" stroke="#d4d4d4" stroke-width=".8"/><path d="M1.2 4.4 L2.6 2.6 L3.6 3.6 L4.4 2.8 L5.4 4.4Z" fill="#d4d4d4"/></svg>
<svg style="position:absolute;left:564.5px;top:216.5px;" width="6" height="6" viewBox="0 0 6 6"><circle cx="2.8" cy="2.8" r="2.4" fill="none" stroke="#d4d4d4" stroke-width=".8"/><path d="M2.8 .4 A2.4 2.4 0 0 1 2.8 5.2Z" fill="#d4d4d4"/></svg>
<span class="t" style="left:576.2px;top:215.6px;font-size:12.4px;line-height:14.9px;color:#d8d8d8;font-weight:700;letter-spacing:0px;font-family:&quot;Liberation Serif&quot;,serif;">T</span>
<svg style="position:absolute;left:587px;top:216.5px;" width="6" height="6" viewBox="0 0 6 6"><rect x=".8" y=".8" width="4.2" height="4.2" fill="none" stroke="#d4d4d4" stroke-width=".8"/><rect x="0" y="0" width="1.4" height="1.4" fill="#d4d4d4"/><rect x="4.4" y="0" width="1.4" height="1.4" fill="#d4d4d4"/><rect x="0" y="4.4" width="1.4" height="1.4" fill="#d4d4d4"/><rect x="4.4" y="4.4" width="1.4" height="1.4" fill="#d4d4d4"/></svg>
<svg style="position:absolute;left:598px;top:216px;" width="7" height="7" viewBox="0 0 7 7"><path d="M.6 .6H3.6L5.4 2.4V6H.6Z" fill="#d4d4d4"/><path d="M3.6 .6V2.4H5.4" fill="none" stroke="#555" stroke-width=".5"/><rect x="3" y="3.6" width="3.4" height="2.8" fill="#d4d4d4" stroke="#555" stroke-width=".4"/></svg>
<svg style="position:absolute;left:610.5px;top:214.8px;" width="5" height="9" viewBox="0 0 5 9"><rect x=".8" y="1" width="3.2" height="7.4" rx="1.2" fill="#3c3c3c"/><circle cx="2.4" cy="2.2" r="1.7" fill="#e8e8e8"/></svg>
<div style="position:absolute;left:506px;top:228.8px;width:53.5px;height:9.6px;background:#454545;border-radius:1px"></div>
<span class="t" style="left:509px;top:230px;font-size:11.6px;line-height:13.9px;color:#e4e4e4;font-weight:500;letter-spacing:0px;">正常</span>
<svg style="position:absolute;left:554.5px;top:232.4px;" width="4" height="3" viewBox="0 0 4 3"><path d="M.4 .5 L2 2.2 L3.6 .5" fill="none" stroke="#b8b8b8" stroke-width=".8"/></svg>
<span class="t" style="left:564px;top:230px;font-size:11.2px;line-height:13.4px;color:#d6d6d6;font-weight:500;letter-spacing:-0.6px;">不透明度<b>:</b></span>
<div style="position:absolute;left:590px;top:228.8px;width:18px;height:9.6px;background:#454545;border-radius:1px"></div>
<span class="t" style="left:591.8px;top:230.1px;font-size:11.2px;line-height:13.4px;color:#e0e0e0;font-weight:400;letter-spacing:-0.6px;">100%</span>
<div style="position:absolute;left:609px;top:228.8px;width:6.5px;height:9.6px;background:#454545;border-radius:1px"></div>
<svg style="position:absolute;left:610.2px;top:232.4px;" width="4" height="3" viewBox="0 0 4 3"><path d="M.4 .5 L2 2.2 L3.6 .5" fill="none" stroke="#b8b8b8" stroke-width=".8"/></svg>
<span class="t" style="left:507px;top:242.4px;font-size:11.2px;line-height:13.4px;color:#d6d6d6;font-weight:500;letter-spacing:-0.2px;">锁定<b>:</b></span>
<svg style="position:absolute;left:524px;top:242.6px;" width="6.4" height="6.4" viewBox="0 0 6.4 6.4"><rect x=".4" y=".4" width="5.6" height="5.6" fill="none" stroke="#d4d4d4" stroke-width=".7"/><rect x="1.4" y="1.4" width="1.8" height="1.8" fill="#d4d4d4"/><rect x="3.2" y="3.2" width="1.8" height="1.8" fill="#d4d4d4"/></svg>
<svg style="position:absolute;left:534px;top:242.4px;" width="7" height="7" viewBox="0 0 7 7"><path d="M6.2 .6 L2.8 4.2" stroke="#e0e0e0" stroke-width="1.7"/><path d="M2.9 3.9 C2 4 1.4 4.8 .6 6.2 C2 6 2.8 5.6 3.4 4.6Z" fill="#e0e0e0"/></svg>
<svg style="position:absolute;left:544.2px;top:242.9px;" width="6" height="6" viewBox="0 0 7 7"><path d="M3.5 .3V6.7M.3 3.5H6.7" stroke="#d4d4d4" stroke-width=".8"/><path d="M3.5 0L4.5 1.3H2.5ZM3.5 7L4.5 5.7H2.5ZM0 3.5L1.3 2.5V4.5ZM7 3.5L5.7 2.5V4.5Z" fill="#d4d4d4"/></svg>
<svg style="position:absolute;left:554px;top:242.4px;" width="7" height="7" viewBox="0 0 7 7"><path d="M.5 1.6V.8H3.7V1.6M2.1 .8V6.2M1.3 6.2H2.9" stroke="#d4d4d4" stroke-width=".7" fill="none"/><path d="M4 2.4H6.4V6.2H4.8" stroke="#d4d4d4" stroke-width=".7" fill="none"/></svg>
<svg style="position:absolute;left:564.8px;top:242px;" width="6" height="7.4" viewBox="0 0 6 7.4"><rect x=".4" y="3" width="5" height="4" rx=".5" fill="#e0e0e0"/><path d="M1.3 3.2V2A1.6 1.6 0 0 1 4.5 2V3.2" fill="none" stroke="#e0e0e0" stroke-width=".8"/></svg>
<span class="t" style="left:575px;top:242.4px;font-size:11.2px;line-height:13.4px;color:#d6d6d6;font-weight:500;letter-spacing:-0.2px;">填充<b>:</b></span>
<div style="position:absolute;left:590px;top:241px;width:18px;height:9.6px;background:#454545;border-radius:1px"></div>
<span class="t" style="left:591.8px;top:242.5px;font-size:11.2px;line-height:13.4px;color:#e0e0e0;font-weight:400;letter-spacing:-0.6px;">100%</span>
<div style="position:absolute;left:609px;top:241px;width:6.5px;height:9.6px;background:#454545;border-radius:1px"></div>
<svg style="position:absolute;left:610.2px;top:244.6px;" width="4" height="3" viewBox="0 0 4 3"><path d="M.4 .5 L2 2.2 L3.6 .5" fill="none" stroke="#b8b8b8" stroke-width=".8"/></svg>
<div style="position:absolute;left:503.6px;top:252.6px;width:106.4px;height:0.6px;background:#3e3e3e;"></div>
<div style="position:absolute;left:503.6px;top:253.2px;width:14.2px;height:18.2px;background:#505050;"></div>
<div style="position:absolute;left:518px;top:253.2px;width:92.3px;height:18.2px;background:#6b6b6b;"></div>
<div style="position:absolute;left:503.6px;top:271.4px;width:106.4px;height:0.6px;background:#3e3e3e;"></div>
<div style="position:absolute;left:503.6px;top:272px;width:106.5px;height:18.4px;background:#4f4f4f;"></div>
<div style="position:absolute;left:517.6px;top:253.2px;width:0.5px;height:37.2px;background:#444;"></div>
<div style="position:absolute;left:503.6px;top:290.4px;width:106.4px;height:0.6px;background:#3e3e3e;"></div>
<div style="position:absolute;left:610.3px;top:252.6px;width:6.7px;height:48.2px;background:#464646;"></div>
<svg style="position:absolute;left:507.6px;top:260.2px;" width="7" height="5" viewBox="0 0 7 5"><path d="M.2 2.4 C1.6 .2 5.2 .2 6.6 2.4 C5.2 4.6 1.6 4.6 .2 2.4Z" fill="#f0f0f0"/><circle cx="3.4" cy="2.4" r="1.05" fill="#444"/></svg>
<svg style="position:absolute;left:507.6px;top:279px;" width="7" height="5" viewBox="0 0 7 5"><path d="M.2 2.4 C1.6 .2 5.2 .2 6.6 2.4 C5.2 4.6 1.6 4.6 .2 2.4Z" fill="#f0f0f0"/><circle cx="3.4" cy="2.4" r="1.05" fill="#444"/></svg>
<svg style="position:absolute;left:518.8px;top:253.8px;" width="17" height="17" viewBox="0 0 17 17"><rect x=".3" y=".3" width="16.4" height="16.4" fill="#2a2a2a" stroke="#f4f4f4" stroke-width=".7"/>
<rect x="1.6" y="1.6" width="13.8" height="13.8" fill="#ececec"/>
<path d="M1.6 10.5 L4.5 9.5 L8 11 L12 9.5 L15.4 10.3 V15.4 H1.6Z" fill="#1c1c1c"/>
<path d="M4.2 6 C4.2 3 6 2 8.6 2 C11.6 2 13.4 3.6 13.4 6.4 C13.4 8 13.6 9 14.4 10 L11 12 L6 12 L3 10.4 C4 9.4 4.2 8 4.2 6Z" fill="#1c1c1c"/>
<path d="M5.4 6.4 C5.6 4.6 7.4 3.6 9.4 3.6 C11.4 4 12.4 5.2 12.3 7 C12.2 9 10.6 10.2 8.8 10.2 C6.8 10.2 5.2 8.6 5.4 6.4Z" fill="#b8b8b8"/>
<path d="M7 7.6 H10.6 C10.4 8.6 9.8 9 8.8 9 C7.8 9 7.2 8.6 7 7.6Z" fill="#2a2a2a"/><path d="M7.2 7.6H10.4V8.1H7.2Z" fill="#fff"/>
<path d="M6.4 5.9H8M9.8 6H11.4" stroke="#2a2a2a" stroke-width=".5"/></svg>
<span class="t" style="left:539.2px;top:259.9px;font-size:11.0px;line-height:13.2px;color:#f0f0f0;font-weight:500;letter-spacing:-0.3px;">表情素材 2</span>
<svg style="position:absolute;left:519.2px;top:273.8px;" width="16" height="16" viewBox="0 0 16 16"><rect x="0" y="0" width="15.6" height="15.6" fill="#2c2c2c"/>
<ellipse cx="7.8" cy="5.6" rx="5.2" ry="4.4" fill="#fff"/><rect x="1.6" y="5.8" width="12.4" height="4.2" fill="#fff"/>
<path d="M3.4 2.6 A1.5 1.5 0 1 1 5 1.4Z" fill="#fff"/><path d="M12.2 2.6 A1.5 1.5 0 1 0 10.6 1.4Z" fill="#fff"/>
<rect x=".8" y="11.4" width="14" height="2.2" fill="#fff"/></svg>
<span class="t" style="left:539.4px;top:278.6px;font-size:11.0px;line-height:13.2px;color:#f0f0f0;font-weight:700;letter-spacing:0px;">背景</span>
<svg style="position:absolute;left:597px;top:278.4px;" width="7" height="7.4" viewBox="0 0 7 7.4"><rect x=".6" y="2.8" width="5.6" height="4" rx=".6" fill="none" stroke="#cfcfcf" stroke-width=".8"/><path d="M1.7 2.8V2A1.7 1.7 0 0 1 5.1 2V2.8" fill="none" stroke="#cfcfcf" stroke-width=".8"/><path d="M1.4 4.8H5.4" stroke="#cfcfcf" stroke-width=".6"/></svg>
<div style="position:absolute;left:503.6px;top:300.8px;width:113.4px;height:0.6px;background:#4a4a4a;"></div>
<div style="position:absolute;left:503.6px;top:301.4px;width:113.4px;height:12.4px;background:#535353;"></div>
<div style="position:absolute;left:503.6px;top:313.4px;width:113.4px;height:2.1px;background:#4a4a4a;"></div>
<div style="position:absolute;left:555px;top:314px;width:12px;height:0.8px;background:#6a6a6a;"></div>
<svg style="position:absolute;left:523.5px;top:303.6px;" width="8" height="5" viewBox="0 0 8 5"><rect x=".4" y="1" width="3.6" height="2.6" rx="1.3" fill="none" stroke="#7e7e7e" stroke-width=".8"/><rect x="3.4" y="1" width="3.6" height="2.6" rx="1.3" fill="none" stroke="#7e7e7e" stroke-width=".8"/></svg>
<span class="t" style="left:537px;top:301.6px;font-size:12.8px;line-height:15.4px;color:#e0e0e0;font-weight:400;letter-spacing:-0.6px;font-family:&quot;Liberation Serif&quot;,serif;font-style:italic;">fx</span>
<svg style="position:absolute;left:549px;top:303px;" width="7" height="6" viewBox="0 0 7 6"><rect x=".3" y=".3" width="6.2" height="5" fill="#e0e0e0"/><circle cx="3.4" cy="2.8" r="1.5" fill="#484848"/></svg>
<svg style="position:absolute;left:561.5px;top:303px;" width="7" height="7" viewBox="0 0 7 7"><circle cx="3" cy="3" r="2.5" fill="none" stroke="#e0e0e0" stroke-width=".8"/><path d="M4.8 1.2 A2.5 2.5 0 0 1 1.2 4.8Z" fill="#e0e0e0"/><path d="M5.6 5.8h1.4l-.7 .8z" fill="#d0d0d0"/></svg>
<svg style="position:absolute;left:574px;top:303px;" width="7" height="6" viewBox="0 0 7 6"><path d="M.3 .6H2.6L3.3 1.4H6.3V5.4H.3Z" fill="#e0e0e0"/></svg>
<svg style="position:absolute;left:586px;top:302.8px;" width="7" height="7" viewBox="0 0 7 7"><path d="M1.6 .5H6V5.4H1.6Z" fill="none" stroke="#d8d8d8" stroke-width=".8"/><path d="M.4 3.2 H3 V6.2 H.4Z" fill="#e0e0e0"/></svg>
<svg style="position:absolute;left:599px;top:302.6px;" width="6.4" height="7" viewBox="0 0 6.4 7"><path d="M.4 1.6H6M2.2 1.4V.5H4.2V1.4" stroke="#e0e0e0" stroke-width=".8" fill="none"/><path d="M1 2.2H5.4L5 6.6H1.4Z" fill="#e0e0e0"/></svg>
</div></body></html>
